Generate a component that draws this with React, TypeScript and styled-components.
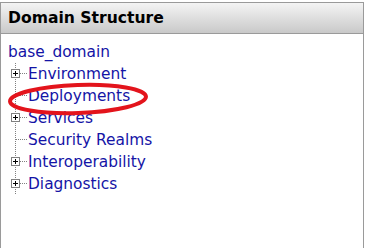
import React from 'react'
import styled, { createGlobalStyle } from 'styled-components'

const Global = createGlobalStyle`
  html, body { margin: 0; padding: 0; background: #fff; }
  body { font-family: "DejaVu Sans", Verdana, sans-serif; }
`

const Panel = styled.div`
  position: relative;
  box-sizing: border-box;
  width: 364px;
  height: 246px;
  margin-top: 2px;
  border: 1px solid #9a9a9a;
  border-bottom: none;
`

const Header = styled.div`
  box-sizing: border-box;
  height: 31px;
  padding: 0 0 1px 7px;
  display: flex;
  align-items: center;
  background: linear-gradient(#f4f4f4, #c9c9c9);
  border-bottom: 1px solid #9a9a9a;
  font-weight: bold;
  font-size: 15.6px;
  color: #000;
`

const Tree = styled.div`
  padding: 7px 0 0 7px;
  display: flex;
  flex-direction: column;
`

const Root = styled.div`
  height: 22px;
  font-size: 15.4px;
  color: #1414a6;
  line-height: 22px;
`

const Row = styled.div`
  position: relative;
  height: 22px;
  display: flex;
  align-items: center;
  padding-left: 20px;
  font-size: 15.4px;
  color: #1414a6;
`

const Connector = styled.svg`
  position: absolute;
  left: 0;
  top: 0;
`

const Ring = styled.svg`
  position: absolute;
  left: 0;
  top: 0;
  pointer-events: none;
`

const items = [
  { label: 'Environment', expand: true },
  { label: 'Deployments', expand: false },
  { label: 'Services', expand: true },
  { label: 'Security Realms', expand: false },
  { label: 'Interoperability', expand: true },
  { label: 'Diagnostics', expand: true },
]

const Node = ({ label, expand }: { label: string; expand: boolean }) => (
  <Row>
    <Connector width="22" height="22">
      {expand ? (
        <>
          <line x1="7.5" y1="0" x2="7.5" y2="6" stroke="#808080" strokeDasharray="1 1" />
          <line x1="7.5" y1="16" x2="7.5" y2="22" stroke="#808080" strokeDasharray="1 1" />
          <rect x="3.5" y="6.5" width="8" height="8" fill="#fff" stroke="#808080" />
          <line x1="5" y1="10.5" x2="10" y2="10.5" stroke="#000" />
          <line x1="7.5" y1="8" x2="7.5" y2="13" stroke="#000" />
          <line x1="12" y1="10.5" x2="20" y2="10.5" stroke="#808080" strokeDasharray="1 1" />
        </>
      ) : (
        <>
          <line x1="7.5" y1="0" x2="7.5" y2="22" stroke="#808080" strokeDasharray="1 1" />
          <line x1="8" y1="10.5" x2="20" y2="10.5" stroke="#808080" strokeDasharray="1 1" />
        </>
      )}
    </Connector>
    {label}
  </Row>
)

export default function App() {
  return (
    <>
      <Global />
      <Panel>
        <Header>Domain Structure</Header>
        <Tree>
          <Root>base_domain</Root>
          {items.map(it => <Node key={it.label} {...it} />)}
        </Tree>
        <Ring width="364" height="246">
          <ellipse cx="77" cy="96" rx="68" ry="14" transform="rotate(-2 77 96)" fill="none" stroke="#e3141c" strokeWidth="4" />
        </Ring>
      </Panel>
    </>
  )
}
